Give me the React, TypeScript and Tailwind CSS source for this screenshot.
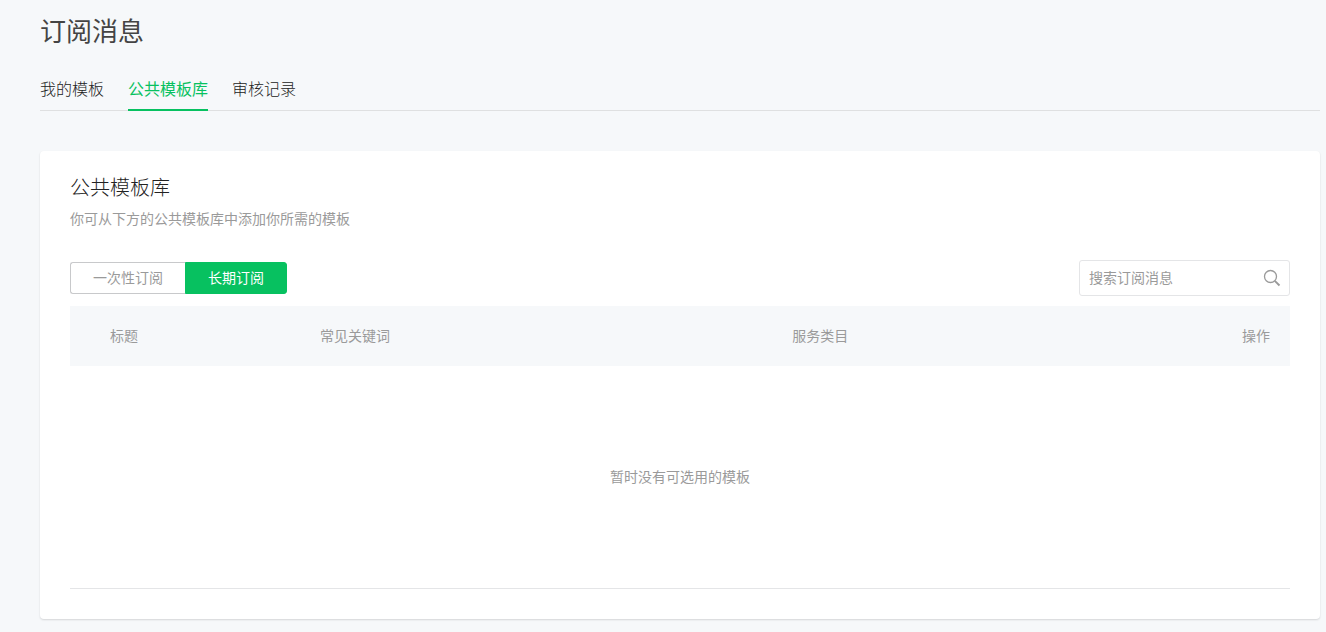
import { useState } from 'react';
import clsx from 'clsx';

const tabs = ['我的模板', '公共模板库', '审核记录'];
const subscribeTypes = ['一次性订阅', '长期订阅'];

const SearchIcon = () => (
    <svg width="18" height="18" viewBox="0 0 18 18" fill="none" stroke="currentColor" aria-hidden="true">
        <circle cx="7.5" cy="7.5" r="6" strokeWidth="1.3" />
        <path d="M11.8 11.8L16.5 16.5" strokeWidth="1.9" />
    </svg>
);

const PageTabs = () => {
    const [active, setActive] = useState(1);

    return (
        <nav className="mt-6 flex gap-6 border-b border-[#dfe0e1]">
            {tabs.map((tab, index) => (
                <button
                    key={tab}
                    type="button"
                    onClick={() => setActive(index)}
                    className={clsx(
                        '-mb-px h-[39px] border-b-2 pb-1.5 text-base leading-6',
                        index === active ? 'border-[#07c160] text-[#07c160]' : 'border-transparent font-light text-[#222222]'
                    )}
                >
                    {tab}
                </button>
            ))}
        </nav>
    );
};

const TypeSwitch = () => {
    const [active, setActive] = useState(1);

    return (
        <div className="flex">
            {subscribeTypes.map((type, index) => (
                <button
                    key={type}
                    type="button"
                    onClick={() => setActive(index)}
                    className={clsx(
                        'h-8 border px-[22px] pb-0.5 first:rounded-l-[3px] first:border-r-0 last:rounded-r-[3px] last:border-l',
                        index === active ? 'border-[#07c160] bg-[#07c160] text-white' : 'border-[#c8c9cb] bg-white'
                    )}
                >
                    {type}
                </button>
            ))}
        </div>
    );
};

const SearchBox = () => (
    <form className="flex h-9 w-[211px] items-center rounded-[3px] border border-[#e4e5e7] pr-2 pl-[9px]">
        <input
            type="text"
            aria-label="搜索订阅消息"
            placeholder="搜索订阅消息"
            className="min-w-0 flex-1 bg-transparent pb-0.5 outline-none placeholder:text-[#9a9a9a]"
        />
        <button type="button" aria-label="搜索">
            <SearchIcon />
        </button>
    </form>
);

const TemplateTable = () => (
    <table className="mt-2.5 w-full table-fixed border-b border-[#e4e5e7] text-left">
        <thead>
            <tr className="h-[60px] bg-[#f6f8fa]">
                <th className="w-[20.5%] pb-0.5 pl-10 font-normal">标题</th>
                <th className="w-[38.7%] pb-0.5 font-normal">常见关键词</th>
                <th className="pb-0.5 font-normal">服务类目</th>
                <th className="w-[10%] pr-5 pb-0.5 text-right font-normal">操作</th>
            </tr>
        </thead>
        <tbody>
            <tr className="h-[222px]">
                <td colSpan={4} className="pb-0.5 text-center">暂时没有可选用的模板</td>
            </tr>
        </tbody>
    </table>
);

const App = () => {
    return (
        <div className="min-h-screen bg-[#f6f8fa] pt-3 pr-1.5 pb-3 pl-10 font-['Noto_Sans_CJK_SC',sans-serif] text-sm text-[#353535]">
            <h1 className="text-[26px] leading-9 text-[#444444]">订阅消息</h1>
            <PageTabs />

            <section className="mt-10 rounded bg-white px-[30px] pt-5 pb-[30px] shadow-[0_1px_2px_rgba(0,0,0,0.14)]">
                <h2 className="text-xl leading-8 font-light text-[#222222]">公共模板库</h2>
                <p className="mt-[3px] leading-6 text-[#9a9a9a]">你可从下方的公共模板库中添加你所需的模板</p>

                <div className="mt-[30px] flex items-center justify-between text-[#9a9a9a]">
                    <TypeSwitch />
                    <SearchBox />
                </div>
                <div className="text-[#9a9a9a]">
                    <TemplateTable />
                </div>
            </section>
        </div>
    );
};

export default App;
